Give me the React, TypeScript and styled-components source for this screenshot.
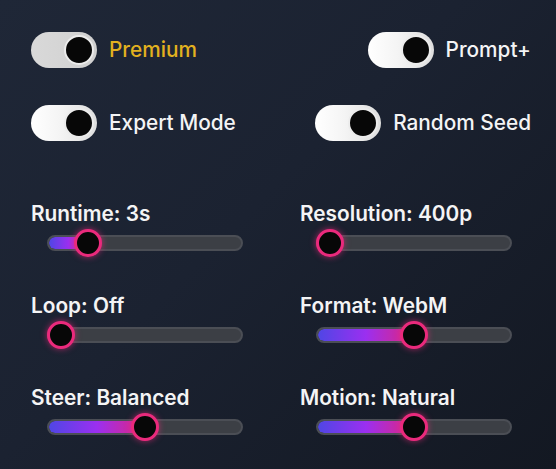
import React from "react";
import styled, { createGlobalStyle } from "styled-components";

const Global = createGlobalStyle`
  html, body { margin: 0; padding: 0; }
  body {
    width: 556px;
    height: 469px;
    overflow: hidden;
    background: linear-gradient(135deg, #1f2737 0%, #1b2231 45%, #131822 100%);
    font-family: Inter, "Noto Sans", "Liberation Sans", sans-serif;
    color: #f4f4f5;
    -webkit-font-smoothing: antialiased;
  }
`;

const Panel = styled.div`
  display: grid;
  grid-template-columns: 231px 231px;
  column-gap: 38px;
  row-gap: 37px;
  padding: 32px 25px 0 31px;
`;

const ToggleRow = styled.label<{ $end?: boolean }>`
  display: flex;
  align-items: center;
  justify-content: ${(p) => (p.$end ? "flex-end" : "flex-start")};
  gap: 12px;
  height: 36px;
`;

const Track = styled.span<{ $muted?: boolean }>`
  position: relative;
  flex: none;
  width: 66px;
  height: 36px;
  border-radius: 18px;
  background: ${(p) =>
    p.$muted
      ? "linear-gradient(90deg, #d9d9d9 0%, #d0d0d0 100%)"
      : "linear-gradient(90deg, #ffffff 0%, #f4f4f4 45%, #dedede 100%)"};
`;

const Knob = styled.span`
  position: absolute;
  top: 3px;
  right: 3px;
  width: 26px;
  height: 26px;
  border-radius: 50%;
  background: #070707;
  border: 2px solid #ececec;
`;

const ToggleText = styled.span<{ $gold?: boolean }>`
  font-size: 20.8px;
  font-weight: 500;
  line-height: 24px;
  color: ${(p) => (p.$gold ? "#e2b11f" : "#f4f4f5")};
`;

const SliderBlock = styled.div<{ $first?: boolean }>`
  display: flex;
  flex-direction: column;
  gap: 3px;
  margin-top: ${(p) => (p.$first ? "24px" : "0")};
`;

const SliderLabel = styled.div`
  font-size: 20.8px;
  font-weight: 600;
  line-height: 24px;
  color: #f4f4f5;
`;

const SliderArea = styled.div`
  position: relative;
  width: 196px;
  height: 28px;
  margin-left: 16px;
  display: flex;
  align-items: center;
`;

const Rail = styled.div`
  position: relative;
  width: 100%;
  height: 16px;
  box-sizing: border-box;
  border-radius: 8px;
  background: #3c3f45;
  border: 2px solid #4b4e55;
  overflow: hidden;
`;

const Fill = styled.div`
  height: 100%;
  border-radius: 6px;
  background: linear-gradient(90deg, #4f46e5 0%, #9b2ff0 50%, #e0267e 100%);
`;

const Thumb = styled.div`
  position: absolute;
  top: 0;
  width: 28px;
  height: 28px;
  box-sizing: border-box;
  border-radius: 50%;
  background: #070707;
  border: 3px solid #ea2a7c;
  box-shadow: 0 0 6px rgba(236, 42, 124, 0.65);
`;

type Toggle = { label: string; gold?: boolean; muted?: boolean; end?: boolean };
type Slider = { label: string; f: number };

const toggles: Toggle[] = [
  { label: "Premium", gold: true, muted: true },
  { label: "Prompt+", end: true },
  { label: "Expert Mode" },
  { label: "Random Seed", end: true },
];

const sliders: Slider[] = [
  { label: "Runtime: 3s", f: 0.16 },
  { label: "Resolution: 400p", f: 0 },
  { label: "Loop: Off", f: 0 },
  { label: "Format: WebM", f: 0.5 },
  { label: "Steer: Balanced", f: 0.5 },
  { label: "Motion: Natural", f: 0.5 },
];

export default function App() {
  return (
    <>
      <Global />
      <Panel>
        {toggles.map((t) => (
          <ToggleRow key={t.label} $end={t.end}>
            <Track $muted={t.muted}>
              <Knob />
            </Track>
            <ToggleText $gold={t.gold}>{t.label}</ToggleText>
          </ToggleRow>
        ))}
        {sliders.map((s, i) => {
          const pos = s.f * 168;
          return (
            <SliderBlock key={s.label} $first={i < 2}>
              <SliderLabel>{s.label}</SliderLabel>
              <SliderArea>
                <Rail>
                  {s.f > 0 && <Fill style={{ width: `${pos + 12}px` }} />}
                </Rail>
                <Thumb style={{ left: `${pos}px` }} />
              </SliderArea>
            </SliderBlock>
          );
        })}
      </Panel>
    </>
  );
}
